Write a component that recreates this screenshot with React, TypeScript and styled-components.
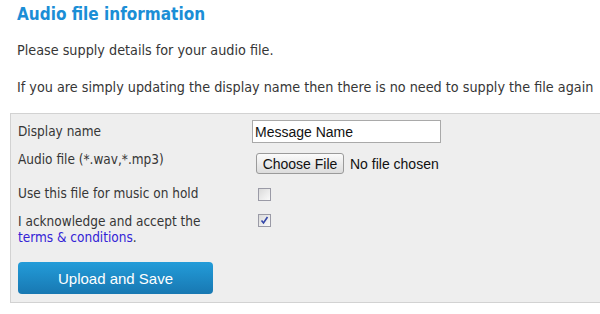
import React from "react";
import styled, { createGlobalStyle } from "styled-components";

const Global = createGlobalStyle`
  html, body { margin: 0; padding: 0; background: #ffffff; overflow: hidden; }
  body { width: 600px; height: 314px; }
`;

const Page = styled.div`
  font-family: "DejaVu Sans Condensed", "DejaVu Sans", sans-serif;
  color: #363636;
  padding-top: 3px;
`;

const Title = styled.h1`
  margin: 0 0 0 17px;
  font-size: 17px;
  line-height: 22px;
  font-weight: bold;
  color: #1b8ed6;
`;

const Para = styled.p<{ $top: number }>`
  margin: ${(p) => p.$top}px 0 0 17px;
  font-size: 14.25px;
  line-height: 16px;
  white-space: nowrap;
`;

const Panel = styled.div`
  margin: 18px 0 0 10px;
  width: 620px;
  background: #eeeeee;
  border: 1px solid #d2d2d2;
  padding: 6px 0 8px 7px;
  box-sizing: border-box;
`;

const FormGrid = styled.div`
  display: grid;
  grid-template-columns: 234px 1fr;
  grid-template-rows: 23px 38px 26px 38px;
  align-items: start;
  font-size: 13.5px;
  line-height: 16px;
`;

const Label = styled.div<{ $pad: number }>`
  padding-top: ${(p) => p.$pad}px;
  white-space: nowrap;
`;

const Cell = styled.div<{ $pad: number }>`
  padding-top: ${(p) => p.$pad}px;
  display: flex;
  align-items: center;
`;

const TextInput = styled.div`
  width: 189px;
  height: 23px;
  box-sizing: border-box;
  border: 1px solid #a9a9a9;
  background: #ffffff;
  font-family: "Liberation Sans", Arial, sans-serif;
  font-size: 14px;
  color: #111;
  display: flex;
  align-items: center;
  padding-left: 2px;
`;

const FileButton = styled.div`
  margin-left: 4px;
  width: 88px;
  height: 21px;
  box-sizing: border-box;
  border: 1px solid #9a9a9a;
  border-radius: 3px;
  background: linear-gradient(#fbfbfb, #dcdcdc);
  font-family: "Liberation Sans", Arial, sans-serif;
  font-size: 14px;
  color: #111;
  display: flex;
  align-items: center;
  justify-content: center;
`;

const FileStatus = styled.span`
  margin-left: 6px;
  font-family: "Liberation Sans", Arial, sans-serif;
  font-size: 14px;
  color: #111;
`;

const Box = styled.div`
  margin-left: 6px;
  width: 13px;
  height: 13px;
  box-sizing: border-box;
  border: 1px solid #9a9aa6;
  background: linear-gradient(135deg, #dadada, #fafafa);
  display: flex;
  align-items: center;
  justify-content: center;
`;

const Link = styled.a`
  color: #3323d6;
  text-decoration: none;
`;

const SaveButton = styled.button`
  margin: 17px 0 0 0;
  width: 195px;
  height: 32px;
  border: none;
  border-radius: 4px;
  background: linear-gradient(#239cd9, #1878b2);
  color: #ffffff;
  font-family: "Liberation Sans", Arial, sans-serif;
  font-size: 15px;
  display: block;
  padding: 0;
`;

export default function App() {
  return (
    <Page>
      <Global />
      <Title>Audio file information</Title>
      <Para $top={17}>Please supply details for your audio file.</Para>
      <Para $top={21}>
        If you are simply updating the display name then there is no need to supply the file again
      </Para>
      <Panel>
        <FormGrid>
          <Label $pad={3}>Display name</Label>
          <Cell $pad={0}>
            <TextInput>Message Name</TextInput>
          </Cell>
          <Label $pad={8}>Audio file (*.wav,*.mp3)</Label>
          <Cell $pad={10}>
            <FileButton>Choose File</FileButton>
            <FileStatus>No file chosen</FileStatus>
          </Cell>
          <Label $pad={4}>Use this file for music on hold</Label>
          <Cell $pad={7}>
            <Box />
          </Cell>
          <Label $pad={6}>
            I acknowledge and accept the
            <br />
            <Link href="#">terms &amp; conditions</Link>.
          </Label>
          <Cell $pad={7}>
            <Box>
              <svg width="9" height="9" viewBox="0 0 9 9">
                <path d="M1.5 4.5 L3.5 7 L7.5 1" fill="none" stroke="#3346a8" strokeWidth="1.6" />
              </svg>
            </Box>
          </Cell>
        </FormGrid>
        <SaveButton>Upload and Save</SaveButton>
      </Panel>
    </Page>
  );
}
